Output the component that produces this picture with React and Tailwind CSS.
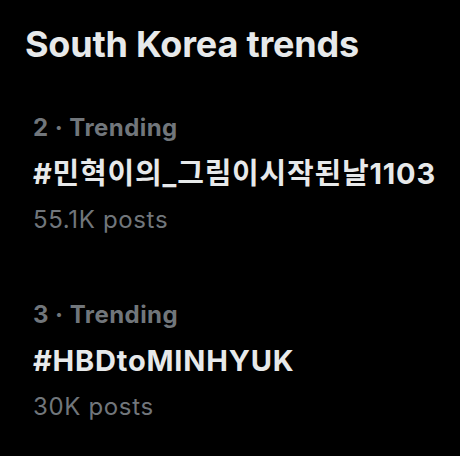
const trends = [
  { rank: 2, tag: '#민혁이의_그림이시작된날1103', posts: '55.1K posts' },
  { rank: 3, tag: '#HBDtoMINHYUK', posts: '30K posts' },
];

export default function App() {
  return (
    <div
      className="w-[460px] h-[456px] bg-black overflow-hidden"
      style={{ fontFamily: 'Inter, "Noto Sans CJK KR", sans-serif' }}
    >
      <h2 className="pl-[25px] pt-[22px] text-[36px] leading-[44px] font-bold text-[#e7e9ea] tracking-[-0.2px]">
        South Korea trends
      </h2>

      <div className="pl-[33px] pt-[39px] flex flex-col gap-[49px]">
        {trends.map((t) => (
          <div key={t.rank} className="flex flex-col">
            <span className="block text-[24px] leading-[46px] font-bold text-[#71767b] tracking-[0.45px]">
              {t.rank} · Trending
            </span>
            <span className="block text-[29px] leading-[46px] font-bold text-[#e7e9ea] tracking-[0.8px]">
              {t.tag}
            </span>
            <span className="block text-[24px] leading-[46px] text-[#71767b] tracking-[0.65px]">{t.posts}</span>
          </div>
        ))}
      </div>
    </div>
  );
}
